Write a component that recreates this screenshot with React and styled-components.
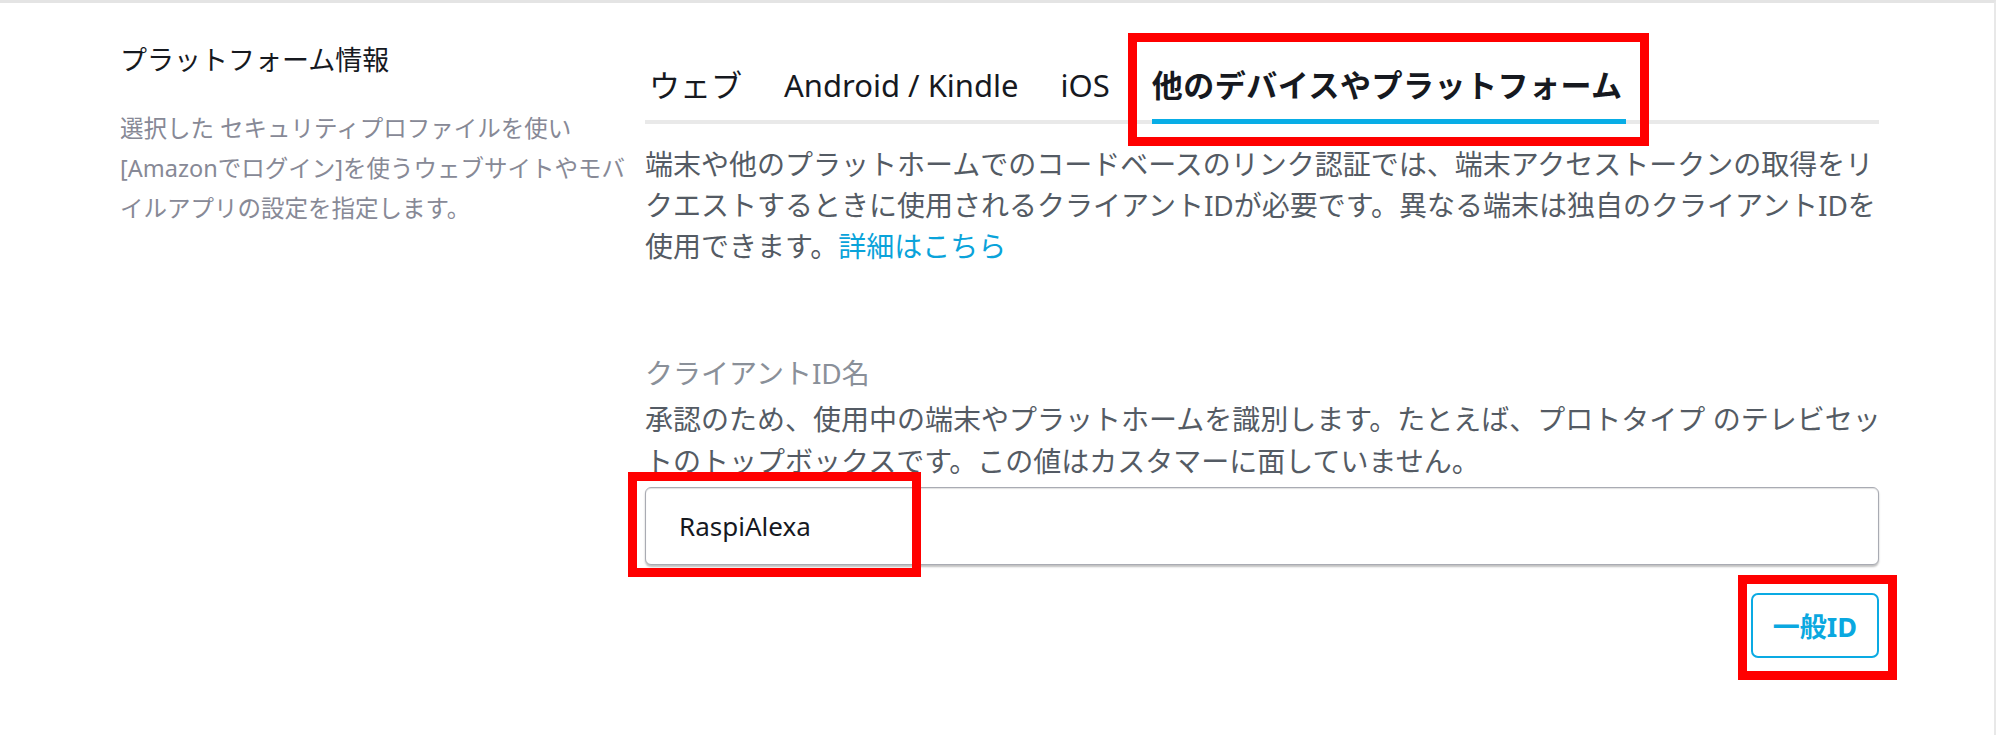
import React from 'react';
import styled, {createGlobalStyle} from 'styled-components';

const GlobalStyle = createGlobalStyle`
  body {
    margin: 0;
    background: #fff;
    font-family: "Noto Sans", "Noto Sans CJK JP", sans-serif;
  }
`;

const Card = styled.div`
  display: flex;
  width: 1996px;
  min-height: 735px;
  box-sizing: border-box;
  border-top: 3px solid #e4e4e4;
  border-right: 2px solid #e8e8e8;
`;

const Side = styled.aside`
  flex-shrink: 0;
  width: 645px;
  box-sizing: border-box;
  padding: 39px 0 0 120px;
`;

const SideTitle = styled.h2`
  margin: 0;
  font-size: 27px;
  font-weight: 400;
  line-height: 36px;
  color: #16191f;
`;

const SideText = styled.p`
  margin: 30px 0 0;
  width: 515px;
  font-size: 23.5px;
  line-height: 40px;
  color: #878996;
`;

const Main = styled.main`
  width: 1234px;
  padding-top: 62px;
`;

const TabList = styled.nav`
  display: flex;
  gap: 42px;
  padding-left: 4px;
  border-bottom: 4px solid #e9e9e9;
`;

const Tab = styled.span`
  position: relative;
  font-size: 31px;
  line-height: 40px;
  padding: 0 ${p => (p.$active ? '4px' : '0')} 14px 0;
  margin-bottom: -4px;
  border-bottom: 5px solid ${p => (p.$active ? '#08ade6' : 'transparent')};
  font-weight: ${p => (p.$active ? 700 : 400)};
  letter-spacing: ${p => (p.$active ? '0.5px' : 'normal')};
  color: #16191f;
`;

const Marker = styled.span`
  position: absolute;
  inset: ${p => p.$inset};
  width: ${p => p.$width || 'auto'};
  box-sizing: border-box;
  border: 9px solid #ff0000;
  pointer-events: none;
`;

const Desc = styled.p`
  margin: 20px 0 0;
  font-size: 28px;
  line-height: 41px;
  color: #545b64;
  white-space: nowrap;
`;

const Link = styled.a`
  color: #0aa3da;
  text-decoration: none;
`;

const Field = styled.section`
  margin-top: 86px;
`;

const Label = styled.div`
  font-size: 28px;
  line-height: 41px;
  color: #8a9099;
`;

const Help = styled.p`
  margin: 4px 0 0;
  font-size: 28px;
  line-height: 42px;
  color: #545b64;
  white-space: nowrap;
`;

const InputWrap = styled.div`
  position: relative;
  margin-top: 5px;
`;

const Input = styled.input`
  display: block;
  width: 100%;
  height: 78px;
  box-sizing: border-box;
  padding: 0 33px;
  border: 1px solid #a9abb3;
  border-radius: 6px;
  box-shadow: 0 2px 2px rgba(0, 0, 0, 0.25), inset 0 1px 1px rgba(0, 0, 0, 0.12);
  font-family: inherit;
  font-size: 26px;
  color: #16191f;
  outline: none;
`;

const ButtonRow = styled.div`
  display: flex;
  justify-content: flex-end;
  margin-top: 28px;
`;

const Button = styled.button`
  position: relative;
  width: 128px;
  height: 65px;
  border: 2px solid #0aaae3;
  border-radius: 7px;
  background: #fff;
  color: #0aa8e0;
  font-family: inherit;
  font-size: 27px;
  font-weight: 700;
  padding: 0;
`;

const tabs = ['ウェブ', 'Android / Kindle', 'iOS'];

export default function App() {
  return (
    <>
      <GlobalStyle />
      <Card>
        <Side>
          <SideTitle>プラットフォーム情報</SideTitle>
          <SideText>
            選択した セキュリティプロファイルを使い[Amazonでログイン]を使うウェブサイトやモバイルアプリの設定を指定します。
          </SideText>
        </Side>
        <Main>
          <TabList>
            {tabs.map(t => (
              <Tab key={t}>{t}</Tab>
            ))}
            <Tab $active>
              他のデバイスやプラットフォーム
              <Marker $inset="-32px -23px -27px -24px" />
            </Tab>
          </TabList>
          <Desc>
            端末や他のプラットホームでのコードベースのリンク認証では、端末アクセストークンの取得をリ
            <br />
            クエストするときに使用されるクライアントIDが必要です。異なる端末は独自のクライアントIDを
            <br />
            使用できます。<Link href="#">詳細はこちら</Link>
          </Desc>
          <Field>
            <Label>クライアントID名</Label>
            <Help>
              承認のため、使用中の端末やプラットホームを識別します。たとえば、プロトタイプ のテレビセッ
              <br />
              トのトップボックスです。この値はカスタマーに面していません。
            </Help>
            <InputWrap>
              <Input defaultValue="RaspiAlexa" />
              <Marker $inset="-15px auto -12px -17px" $width="293px" />
            </InputWrap>
            <ButtonRow>
              <Button>
                一般ID
                <Marker $inset="-20px -20px -24px -15px" />
              </Button>
            </ButtonRow>
          </Field>
        </Main>
      </Card>
    </>
  );
}
